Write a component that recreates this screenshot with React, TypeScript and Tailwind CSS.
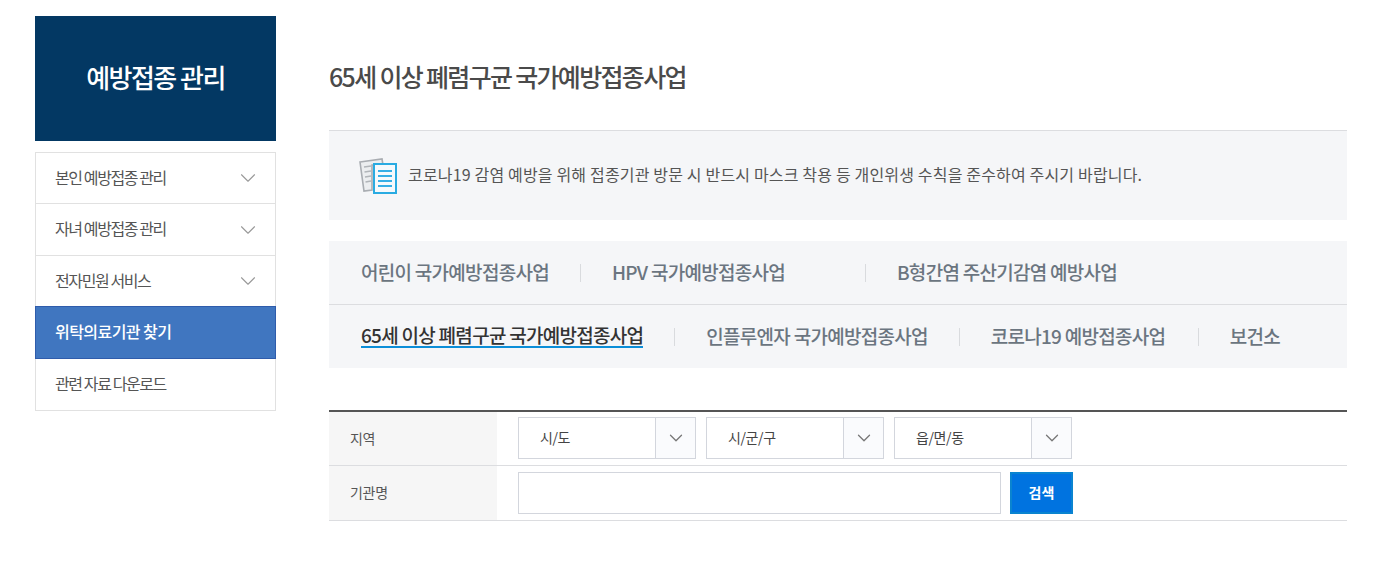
import { ChevronDown } from "lucide-react";

const font = { fontFamily: '"Noto Sans CJK KR", "Noto Sans", sans-serif' };

const menu = [
  { label: "본인 예방접종 관리", h: "h-[51px]" },
  { label: "자녀 예방접종 관리", h: "h-[52px]" },
  { label: "전자민원 서비스", h: "h-[51px]" },
];

function Tab({ label, first, active, w }: { label: string; first?: boolean; active?: boolean; w?: string }) {
  return (
    <div className={`flex items-center h-[18px] ${first ? "pr-[31px]" : "pl-[31px] pr-[31px] border-l border-[#d9dbde]"} ${w ?? ""}`}>
      <span
        className={`text-[19px] -mt-[2px] font-medium tracking-[-0.72px] whitespace-nowrap ${
          active ? "leading-[22px] text-[#333] border-b-2 border-[#0b8ed8]" : "leading-[24px] text-[#6b7580]"
        }`}
      >
        {label}
      </span>
    </div>
  );
}

function Select({ label, w }: { label: string; w: string }) {
  return (
    <div className={`flex h-[42px] border border-[#d3d6dd] bg-white ${w}`}>
      <div className="flex-1 flex items-center pl-[21px] pb-[1px] text-[14px] tracking-[-0.4px] text-[#444]">{label}</div>
      <div className="w-[40px] border-l border-[#d3d6dd] bg-[#fafbfd] flex items-center justify-center">
        <ChevronDown size={22} strokeWidth={1.4} className="text-[#777]" />
      </div>
    </div>
  );
}

function DocIcon() {
  return (
    <svg width="38" height="38" viewBox="0 0 38 38" fill="none">
      <path d="M1 5 L23 2 L24 8 L13 8 L13 33 L5 34 Z" fill="#eceef0" stroke="#a9adb2" strokeWidth="1.6" />
      <path d="M5 10 L12 9 M5.5 15 L12 14 M6 20 L12 19 M6.5 25 L12 24" stroke="#b1b5b9" strokeWidth="1.6" />
      <rect x="15" y="7" width="22" height="29" fill="#f5f9fc" stroke="#29abe2" strokeWidth="2" />
      <path d="M19 14 H33 M19 19 H33 M19 24 H33 M19 29 H33" stroke="#35aee6" strokeWidth="2" />
    </svg>
  );
}

export default function App() {
  return (
    <div className="flex w-[1375px] h-[580px] bg-white pl-[35px] pt-4" style={font}>
      <aside className="w-[241px] shrink-0">
        <div className="h-[125px] bg-[#033863] flex items-center justify-center pb-[5px] text-white text-[26px] font-medium tracking-[-1.55px]">
          예방접종 관리
        </div>
        <nav className="mt-[11px] border border-[#e1e1e1] border-b-0">
          {menu.map((m) => (
            <div key={m.label} className={`${m.h} border-b border-[#e1e1e1] flex items-center justify-between pl-[19px] pr-[14px]`}>
              <span className="text-[16px] pb-[3px] tracking-[-1.4px] text-[#555]">{m.label}</span>
              <ChevronDown size={26} strokeWidth={1} className="text-[#999]" />
            </div>
          ))}
        </nav>
        <div className="h-[53px] -mt-px bg-[#4076c0] border border-[#2f5cab] flex items-center pl-[19px] pb-[3px] text-white text-[16px] font-medium tracking-[-0.55px]">
          위탁의료기관 찾기
        </div>
        <div className="h-[52px] border border-t-0 border-[#e1e1e1] flex items-center pl-[19px] pb-[3px] text-[16px] tracking-[-1.4px] text-[#555]">
          관련 자료 다운로드
        </div>
      </aside>

      <main className="w-[1018px] ml-[53px]">
        <h1 className="h-[114px] pt-[41px] text-[25px] leading-[38px] font-medium tracking-[-1.68px] text-[#4a4a4a]">
          65세 이상 폐렴구균 국가예방접종사업
        </h1>
        <div className="h-[90px] border-t border-[#dcdde0] bg-[#f5f6f8] flex items-center pl-[30px] gap-[11px]">
          <DocIcon />
          <span className="text-[16px] pb-[4px] tracking-[0.17px] text-[#555]">
            코로나19 감염 예방을 위해 접종기관 방문 시 반드시 마스크 착용 등 개인위생 수칙을 준수하여 주시기 바랍니다.
          </span>
        </div>

        <div className="mt-[21px] bg-[#f5f6f8]">
          <div className="h-[64px] pl-[32px] flex items-center border-b border-[#dcdde0]">
            <Tab label="어린이 국가예방접종사업" first />
            <Tab label="HPV 국가예방접종사업" w="w-[285px]" />
            <Tab label="B형간염 주산기감염 예방사업" />
          </div>
          <div className="h-[63px] pl-[32px] flex items-center">
            <Tab label="65세 이상 폐렴구균 국가예방접종사업" first active />
            <Tab label="인플루엔자 국가예방접종사업" />
            <Tab label="코로나19 예방접종사업" w="w-[239px]" />
            <Tab label="보건소" />
          </div>
        </div>

        <div className="mt-[42px] border-t-2 border-[#555]">
          <div className="flex h-[54px] border-b border-[#dcdde0]">
            <div className="w-[168px] bg-[#f6f6f6] flex items-center pl-[21px] pb-[1px] text-[14px] tracking-[-0.3px] text-[#555]">지역</div>
            <div className="flex items-start pt-[5px] pl-[21px] gap-[10px]">
              <Select label="시/도" w="w-[178px]" />
              <Select label="시/군/구" w="w-[178px]" />
              <Select label="읍/면/동" w="w-[178px]" />
            </div>
          </div>
          <div className="flex h-[55px] border-b border-[#dcdde0]">
            <div className="w-[168px] bg-[#f6f6f6] flex items-center pl-[21px] pb-[1px] text-[14px] tracking-[-0.3px] text-[#555]">기관명</div>
            <div className="flex items-start pt-[6px] pl-[21px] gap-[9px]">
              <input className="w-[483px] h-[42px] border border-[#d3d6dd] bg-white" />
              <button className="w-[63px] h-[42px] bg-[#0073e0] border-2 border-[#0a84d0] text-white text-[14px] font-bold pb-[1px]">검색</button>
            </div>
          </div>
        </div>
      </main>
    </div>
  );
}
